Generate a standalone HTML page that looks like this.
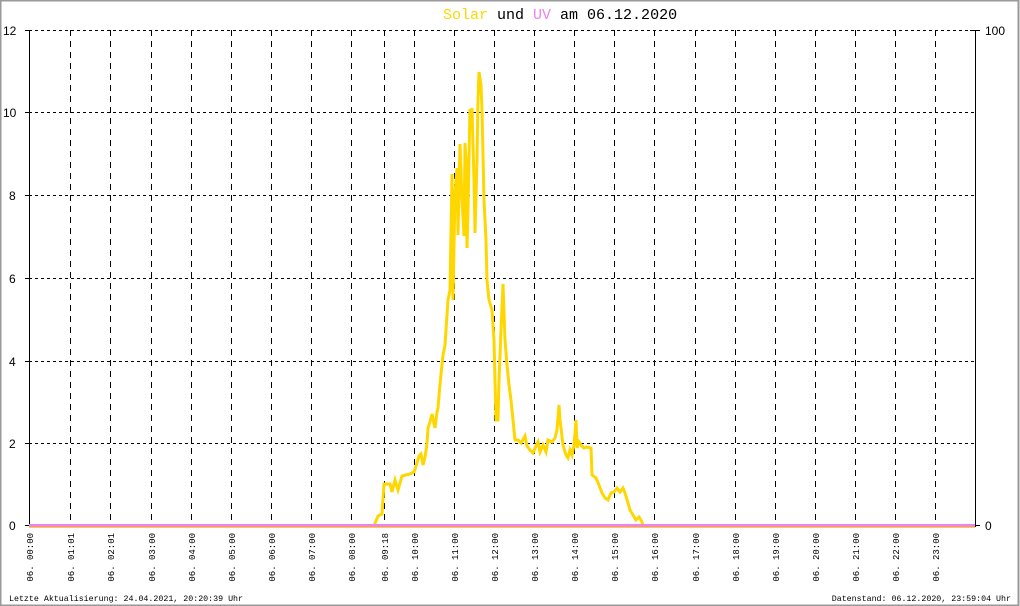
<!DOCTYPE html>
<html><head><meta charset="utf-8"><style>
html,body{margin:0;padding:0;background:#fff;}
svg{display:block;}
</style></head><body>
<svg width="1020" height="606" viewBox="0 0 1020 606" xmlns="http://www.w3.org/2000/svg">
<rect x="0" y="0" width="1020" height="606" fill="#fff"/>
<rect x="0.5" y="0.5" width="1018" height="605" fill="none" stroke="#999" stroke-width="2"/>
<text x="443" y="19" font-family="Liberation Mono, monospace" font-size="15" fill="#000"><tspan fill="#FFD700">Solar</tspan> und <tspan fill="#EE82EE">UV</tspan> am 06.12.2020</text>
<g shape-rendering="crispEdges">
<g stroke="#000" stroke-width="1" stroke-dasharray="3,3" fill="none">
<line x1="29" y1="30.5" x2="975" y2="30.5"/>
<line x1="29" y1="112.5" x2="975" y2="112.5"/>
<line x1="29" y1="195.5" x2="975" y2="195.5"/>
<line x1="29" y1="278.5" x2="975" y2="278.5"/>
<line x1="29" y1="361.5" x2="975" y2="361.5"/>
<line x1="29" y1="443.5" x2="975" y2="443.5"/>
</g>
<g stroke="#000" stroke-width="1" stroke-dasharray="6,5" fill="none">
<line x1="70.5" y1="30" x2="70.5" y2="526"/>
<line x1="110.5" y1="30" x2="110.5" y2="526"/>
<line x1="151.5" y1="30" x2="151.5" y2="526"/>
<line x1="191.5" y1="30" x2="191.5" y2="526"/>
<line x1="231.5" y1="30" x2="231.5" y2="526"/>
<line x1="271.5" y1="30" x2="271.5" y2="526"/>
<line x1="311.5" y1="30" x2="311.5" y2="526"/>
<line x1="351.5" y1="30" x2="351.5" y2="526"/>
<line x1="384.5" y1="30" x2="384.5" y2="526"/>
<line x1="414.5" y1="30" x2="414.5" y2="526"/>
<line x1="454.5" y1="30" x2="454.5" y2="526"/>
<line x1="494.5" y1="30" x2="494.5" y2="526"/>
<line x1="534.5" y1="30" x2="534.5" y2="526"/>
<line x1="574.5" y1="30" x2="574.5" y2="526"/>
<line x1="614.5" y1="30" x2="614.5" y2="526"/>
<line x1="654.5" y1="30" x2="654.5" y2="526"/>
<line x1="695.5" y1="30" x2="695.5" y2="526"/>
<line x1="735.5" y1="30" x2="735.5" y2="526"/>
<line x1="775.5" y1="30" x2="775.5" y2="526"/>
<line x1="815.5" y1="30" x2="815.5" y2="526"/>
<line x1="855.5" y1="30" x2="855.5" y2="526"/>
<line x1="895.5" y1="30" x2="895.5" y2="526"/>
<line x1="935.5" y1="30" x2="935.5" y2="526"/>
</g>
<g stroke="#000" stroke-width="1" fill="none">
<line x1="29.5" y1="30" x2="29.5" y2="527"/>
<line x1="975.5" y1="30" x2="975.5" y2="527"/>
<line x1="25" y1="30.5" x2="29" y2="30.5"/>
<line x1="25" y1="112.5" x2="29" y2="112.5"/>
<line x1="25" y1="195.5" x2="29" y2="195.5"/>
<line x1="25" y1="278.5" x2="29" y2="278.5"/>
<line x1="25" y1="361.5" x2="29" y2="361.5"/>
<line x1="25" y1="443.5" x2="29" y2="443.5"/>
<line x1="25" y1="525.5" x2="29" y2="525.5"/>
<line x1="970" y1="30.5" x2="980" y2="30.5"/>
<line x1="975" y1="525.5" x2="980" y2="525.5"/>
</g>
<rect x="29" y="527" width="946" height="1" fill="#FFD700"/>
</g>
<polyline fill="none" stroke="#FFD700" stroke-width="3" stroke-linejoin="miter" points="
374,526 378,516 382,514 384,484 390,484 392,492 395,480 398,490 402,476 410,474 414,472 416,466 419,456 421,454 423,465 425,457 427,444 428,428 430,422 432,414 435,428 437,412 438,408 440,384 443,355 445,345 448,300 450,290 452,174 453,300 455,193 457,168 458,235 460,144 462,200 464,236 465,143 466,160 467,248 468,210 470,109 471,128 472,108 474,180 475,233 477,160 478,100 479,72 481,85 482,110 484,200 486,240 487,280 489,300 492,310 494,340 496,420 498,420 499,380 501,330 503,284 505,340 507,365 509,385 511,400 513,420 515,440 518,440 521,443 525,436 527,446 530,450 533,453 536,446 538,442 540,452 543,445 546,452 548,440 552,442 555,438 557,430 559,405 560,420 561,428 563,445 566,455 568,458 570,450 572,455 574,445 576,420 577,448 579,442 581,445 584,448 587,447 591,448 592,475 596,478 599,485 602,493 605,498 608,500 611,493 614,492 617,488 620,492 623,488 625,493 628,503 630,510 633,515 636,520 639,517 642,522 643,526"/>
<rect x="29" y="524" width="946" height="3" fill="#EE82EE"/>
<g font-family="Liberation Sans, sans-serif" font-size="12" fill="#000">
<text x="3" y="35">12</text>
<text x="3" y="117">10</text>
<text x="9" y="200">8</text>
<text x="9" y="283">6</text>
<text x="9" y="366">4</text>
<text x="9" y="448">2</text>
<text x="9" y="530">0</text>
<text x="985" y="35">100</text>
<text x="985" y="530">0</text>
</g>
<g font-family="Liberation Mono, monospace" font-size="9" fill="#000" text-anchor="end">
<text transform="translate(33,533) rotate(-90)">06. 00:00</text>
<text transform="translate(74,533) rotate(-90)">06. 01:01</text>
<text transform="translate(114,533) rotate(-90)">06. 02:01</text>
<text transform="translate(155,533) rotate(-90)">06. 03:00</text>
<text transform="translate(195,533) rotate(-90)">06. 04:00</text>
<text transform="translate(235,533) rotate(-90)">06. 05:00</text>
<text transform="translate(275,533) rotate(-90)">06. 06:00</text>
<text transform="translate(315,533) rotate(-90)">06. 07:00</text>
<text transform="translate(355,533) rotate(-90)">06. 08:00</text>
<text transform="translate(388,533) rotate(-90)">06. 09:18</text>
<text transform="translate(418,533) rotate(-90)">06. 10:00</text>
<text transform="translate(458,533) rotate(-90)">06. 11:00</text>
<text transform="translate(498,533) rotate(-90)">06. 12:00</text>
<text transform="translate(538,533) rotate(-90)">06. 13:00</text>
<text transform="translate(578,533) rotate(-90)">06. 14:00</text>
<text transform="translate(618,533) rotate(-90)">06. 15:00</text>
<text transform="translate(658,533) rotate(-90)">06. 16:00</text>
<text transform="translate(699,533) rotate(-90)">06. 17:00</text>
<text transform="translate(739,533) rotate(-90)">06. 18:00</text>
<text transform="translate(779,533) rotate(-90)">06. 19:00</text>
<text transform="translate(819,533) rotate(-90)">06. 20:00</text>
<text transform="translate(859,533) rotate(-90)">06. 21:00</text>
<text transform="translate(899,533) rotate(-90)">06. 22:00</text>
<text transform="translate(939,533) rotate(-90)">06. 23:00</text>
</g>
<g font-family="Liberation Mono, monospace" font-size="8.3" fill="#000">
<text x="9" y="601">Letzte Aktualisierung: 24.04.2021, 20:20:39 Uhr</text>
<text x="1011" y="601" text-anchor="end">Datenstand: 06.12.2020, 23:59:04 Uhr</text>
</g>
</svg>
</body></html>
